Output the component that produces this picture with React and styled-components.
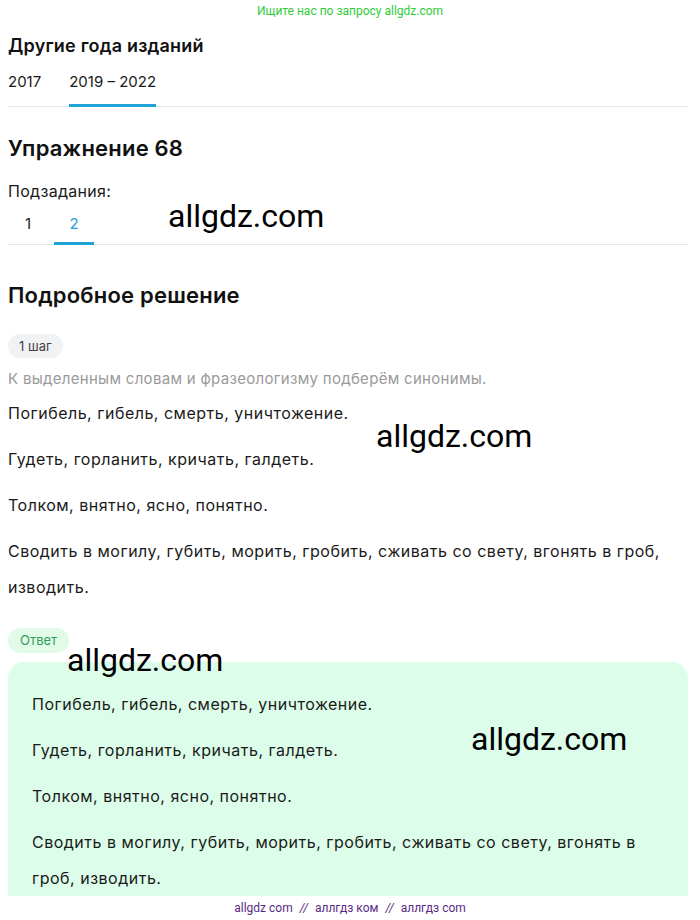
import React from 'react';
import styled, { createGlobalStyle } from 'styled-components';

const COLORS = {
  text: '#1a1a1a',
  muted: '#9a9a9a',
  blue: '#1fa2d6',
  divider: '#e6e8ea',
  green: '#2fcb3a',
  answerBg: '#dcfde9',
  answerPill: '#e2fbe9',
  answerPillText: '#2f9e5a',
  stepPill: '#f1f2f4',
  purple: '#5b2a86',
};

const GlobalStyle = createGlobalStyle`
  html, body {
    margin: 0;
    padding: 0;
    background: #fff;
  }
  body {
    font-family: Inter, "Noto Sans", sans-serif;
    color: ${COLORS.text};
  }
`;

const years = ['2017', '2019 – 2022'];
const subtasks = ['1', '2'];

const solution = [
  'Погибель, гибель, смерть, уничтожение.',
  'Гудеть, горланить, кричать, галдеть.',
  'Толком, внятно, ясно, понятно.',
  'Сводить в могилу, губить, морить, гробить, сживать со свету, вгонять в гроб, изводить.',
];

const App = () => {
  return (
    <>
      <GlobalStyle />
      <Page>
        <TopHint>Ищите нас по запросу allgdz.com</TopHint>
        <Content>
          <SmallTitle>Другие года изданий</SmallTitle>
          <Tabs>
            {years.map((y, i) => (
              <Tab key={y} active={i === 1}>{y}</Tab>
            ))}
          </Tabs>

          <Title>Упражнение 68</Title>
          <Label>Подзадания:</Label>
          <Tabs>
            {subtasks.map((s, i) => (
              <SubTab key={s} active={i === 1}>{s}</SubTab>
            ))}
            <Watermark style={{ left: 160, top: -6 }}>allgdz.com</Watermark>
          </Tabs>

          <Title spaced>Подробное решение</Title>
          <Pill>1 шаг</Pill>
          <Hint>К выделенным словам и фразеологизму подберём синонимы.</Hint>
          <Text>
            {solution.map((p) => <Para key={p}>{p}</Para>)}
            <Watermark style={{ left: 368, top: 22 }}>allgdz.com</Watermark>
          </Text>

          <AnswerPill>Ответ</AnswerPill>
          <AnswerBox>
            <Watermark style={{ left: 59, top: -21 }}>allgdz.com</Watermark>
            <Watermark style={{ left: 463, top: 58 }}>allgdz.com</Watermark>
            {solution.map((p) => <Para key={p}>{p}</Para>)}
          </AnswerBox>
        </Content>
        <Footer>
          allgdz com <Sep>//</Sep> аллгдз ком <Sep>//</Sep> аллгдз com
        </Footer>
      </Page>
    </>
  );
};

const Page = styled.div`
  width: 700px;
  height: 920px;
  overflow: hidden;
  display: flex;
  flex-direction: column;
`;

const TopHint = styled.div`
  font-family: Roboto, "Liberation Sans", sans-serif;
  font-size: 12px;
  line-height: 22px;
  color: ${COLORS.green};
  text-align: center;
`;

const Content = styled.div`
  flex: 1;
  min-height: 0;
  overflow: hidden;
  padding: 0 12px 0 8px;
`;

const SmallTitle = styled.h3`
  margin: 11px 0 0;
  font-size: 18px;
  font-weight: 600;
  line-height: 26px;
  letter-spacing: 0.2px;
  color: #111;
`;

const Tabs = styled.div`
  position: relative;
  display: flex;
  border-bottom: 1px solid ${COLORS.divider};
`;

const Tab = styled.div`
  padding: 11px 0 10px;
  margin-right: 28px;
  font-size: 15px;
  line-height: 24px;
  color: ${COLORS.text};
  border-bottom: 3px solid ${(p) => (p.active ? COLORS.blue : 'transparent')};
  margin-bottom: -1px;
`;

const SubTab = styled.div`
  width: 40px;
  padding: 9px 0 6px;
  margin-right: 6px;
  text-align: center;
  font-size: 15px;
  line-height: 24px;
  color: ${(p) => (p.active ? COLORS.blue : COLORS.text)};
  border-bottom: 3px solid ${(p) => (p.active ? COLORS.blue : 'transparent')};
  margin-bottom: -1px;
`;

const Title = styled.h2`
  margin: ${(p) => (p.spaced ? '34px' : '25px')} 0 0;
  font-size: 22px;
  font-weight: 600;
  line-height: 32px;
  letter-spacing: 0.2px;
  color: #111;
`;

const Label = styled.div`
  margin-top: 15px;
  font-size: 16px;
  line-height: 24px;
  letter-spacing: 0.3px;
`;

const Pill = styled.div`
  display: inline-block;
  margin-top: 23px;
  padding: 0 11px;
  height: 24px;
  line-height: 24px;
  border-radius: 12px;
  background: ${COLORS.stepPill};
  font-size: 13px;
  color: #444;
`;

const Hint = styled.div`
  margin-top: 8px;
  font-size: 15px;
  line-height: 26px;
  letter-spacing: 0.3px;
  color: ${COLORS.muted};
`;

const Text = styled.div`
  position: relative;
  margin-top: 3px;
`;

const Para = styled.p`
  margin: 0 0 10px;
  font-size: 16px;
  line-height: 36px;
  letter-spacing: 0.5px;
`;

const AnswerPill = styled.div`
  display: inline-block;
  margin-top: 13px;
  padding: 0 12px;
  height: 25px;
  line-height: 25px;
  border-radius: 13px;
  background: ${COLORS.answerPill};
  font-size: 13px;
  color: ${COLORS.answerPillText};
`;

const AnswerBox = styled.div`
  position: relative;
  margin-top: 9px;
  padding: 24px 24px 20px;
  border-radius: 16px;
  background: ${COLORS.answerBg};
`;

const Watermark = styled.span`
  position: absolute;
  font-family: Roboto, "Liberation Sans", sans-serif;
  font-size: 32px;
  line-height: 38px;
  color: #000;
  white-space: nowrap;
  pointer-events: none;
`;

const Footer = styled.div`
  height: 24px;
  flex-shrink: 0;
  font-family: Roboto, "Liberation Sans", sans-serif;
  font-size: 12px;
  line-height: 24px;
  text-align: center;
  color: ${COLORS.purple};
`;

const Sep = styled.span`
  margin: 0 4px;
  font-style: italic;
`;

export default App;
